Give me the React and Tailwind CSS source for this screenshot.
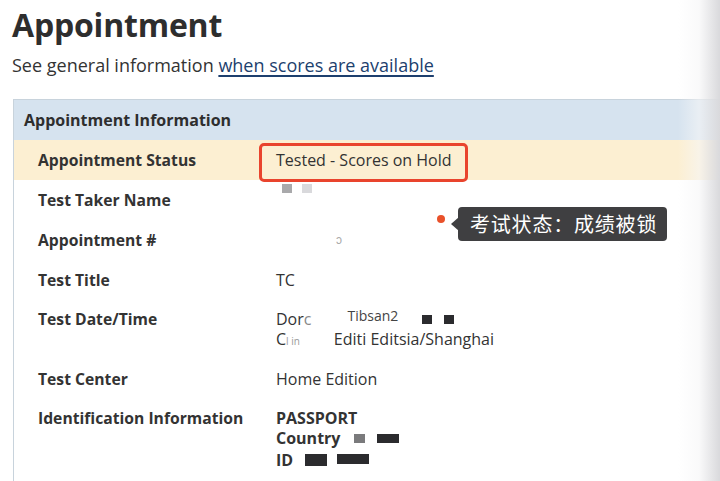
import React from "react";

const Blk = ({ c = "bg-[#2b2b2e]", w = "w-[12px]", h = "h-[10px]", extra = "" }) => (
  <span className={`inline-block align-middle ${c} ${w} ${h} ${extra}`} />
);

const LBL = "w-[262px] pl-[24px] font-bold text-[15.7px] leading-[20px] text-[#333]";

function Row({ label, children, pt = "pt-[10px]", pb = "pb-[10px]" }) {
  return (
    <div className={`flex ${pt} ${pb}`}>
      <div className={LBL}>{label}</div>
      <div className="flex-1 text-[16px] leading-[20px] text-[#333]">{children}</div>
    </div>
  );
}

export default function App() {
  return (
    <div className="relative w-[720px] h-[481px] overflow-hidden bg-white" style={{ fontFamily: '"Open Sans", "Noto Sans CJK SC", sans-serif' }}>
      <div className="pl-[12px] pt-[3px]">
        <h1 className="text-[32px] leading-[44px] font-bold text-[#2e2e2e] tracking-[-0.2px]">Appointment</h1>
        <p className="mt-[6px] text-[18px] leading-[24px] text-[#333]">
          See general information{" "}
          <span className="text-[#1d3f6e] underline underline-offset-[3px] decoration-[1.5px]">when scores are available</span>
        </p>
      </div>

      <div className="ml-[13px] mt-[22px] border-l border-t border-[#c8d3dc]">
        <div className="bg-[#d6e3ef] h-[40px] flex items-center pl-[10px] font-bold text-[16px] text-[#2e2e2e]">
          Appointment Information
        </div>
        <div className="flex pt-[10px] pb-[10px] bg-[#fcefd2] relative">
          <div className={LBL}>Appointment Status</div>
          <div className="text-[16px] leading-[20px] text-[#333]">Tested - Scores on Hold</div>
          <div className="absolute left-[245px] top-[3px] w-[209px] h-[39px] border-[3px] border-[#e9442d] rounded-[5px]" />
        </div>
        <Row label="Test Taker Name">
          <span className="relative block h-[20px]">
            <span className="absolute left-[6px] -top-[6px] flex gap-[10px]">
              <Blk c="bg-[#a9a9ab]" w="w-[10px]" h="h-[9px]" />
              <Blk c="bg-[#d9d9dc]" w="w-[10px]" h="h-[9px]" />
            </span>
          </span>
        </Row>
        <Row label="Appointment #">
          <span className="block h-[20px] overflow-hidden pl-[60px] text-[#aaa] text-[12px] leading-[20px]">ɔ</span>
        </Row>
        <Row label="Test Title" pb="pb-[9px]">TC</Row>
        <div className="flex py-[10px]">
          <div className={LBL}>Test Date/Time</div>
          <div className="flex-1 text-[16px] text-[#333]">
            <div className="h-[20px] leading-[20px] flex items-center">
              Dor<span className="text-[#888]">c</span>
              <span className="ml-[36px] text-[14px] text-[#444] -mt-[6px]">Tibsan2</span>
              <span className="flex gap-[12px] ml-[24px]">
                <Blk c="bg-[#2b2b2e]" w="w-[10px]" h="h-[9px]" />
                <Blk c="bg-[#2b2b2e]" w="w-[10px]" h="h-[9px]" />
              </span>
            </div>
            <div className="h-[21px] leading-[21px]">
              C<span className="text-[#999] text-[10px]">l in</span>
              <span className="ml-[34px]">Editi Edit</span>sia/Shanghai
            </div>
          </div>
        </div>
        <Row label="Test Center" pt="pt-[9px]">Home Edition</Row>
        <div className="flex pt-[9px] pb-[10px]">
          <div className={LBL}>Identification Information</div>
          <div className="font-bold text-[16px] leading-[21.5px] text-[#333]">
            <div className="h-[20px] leading-[20px]">PASSPORT</div>
            <div className="flex items-center h-[21.5px]">Country<span className="ml-[14px] flex gap-[12px]"><Blk c="bg-[#7a7a7c]" w="w-[11px]" h="h-[9px]" /><Blk c="bg-[#2b2b2e]" w="w-[22px]" h="h-[9px]" /></span></div>
            <div className="flex items-center h-[21.5px]">ID<span className="ml-[12px] flex gap-[10px]"><Blk c="bg-[#2b2b2e]" w="w-[22px]" h="h-[12px]" /><Blk c="bg-[#2b2b2e]" w="w-[32px]" h="h-[10px]" /></span></div>
          </div>
        </div>
      </div>

      {/* annotation tooltip */}
      <div className="absolute left-[437px] top-[215px] w-[8px] h-[8px] rounded-full bg-[#e9512a]" />
      <div className="absolute left-[458px] top-[207px] h-[34px] pl-[12px] pr-[10px] flex items-center rounded-[4px] bg-[#3f3f41] text-white text-[20px] tracking-[0.8px]" style={{ fontFamily: '"Noto Sans CJK SC", sans-serif' }}>
        考试状态：成绩被锁
        <div className="absolute -left-[7px] top-[10px] w-0 h-0 border-y-[7px] border-y-transparent border-r-[8px] border-r-[#3f3f41]" />
      </div>

      {/* right edge page shadow */}
      <div className="absolute right-0 top-0 w-[42px] h-full bg-gradient-to-r from-transparent via-[#f6f6f7]/60 to-[#d9d9dc] pointer-events-none" />
    </div>
  );
}
